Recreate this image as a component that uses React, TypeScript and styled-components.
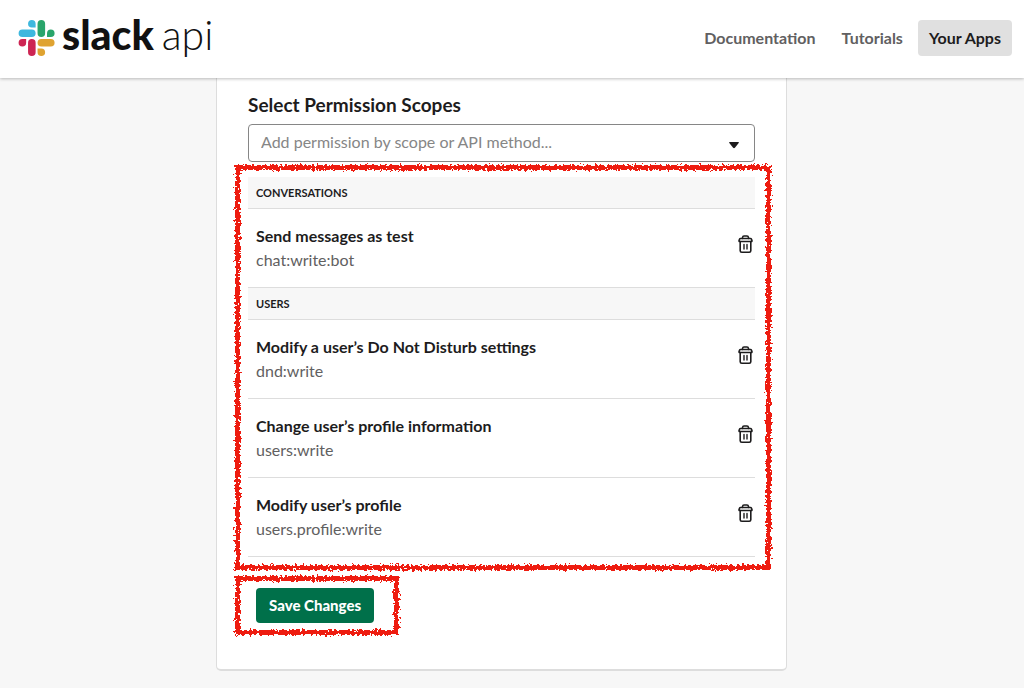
import React from "react";
import styled, { createGlobalStyle } from "styled-components";

const GlobalStyle = createGlobalStyle`
  *, *::before, *::after { box-sizing: border-box; }
  body {
    margin: 0;
    background: #f7f7f7;
    color: #1d1c1d;
    font-family: Lato, "Liberation Sans", sans-serif;
    font-size: 16px;
    line-height: 24px;
  }
  h2, h3, h4, p, ul { margin: 0; padding: 0; }
`;

const Header = styled.header`
  position: sticky;
  top: 0;
  z-index: 2;
  display: flex;
  align-items: center;
  justify-content: space-between;
  height: 78px;
  padding: 0 12px 2px 18px;
  background: #fff;
  box-shadow: 0 1px 3px rgba(0, 0, 0, 0.25);
`;

const Brand = styled.a`
  display: flex;
  align-items: center;
  gap: 8px;
  color: #111;
  text-decoration: none;
`;

const Wordmark = styled.span`
  display: flex;
  gap: 8px;
  padding-bottom: 6px;
  font-size: 41px;
  line-height: 40px;
`;

const BrandName = styled.span`
  font-weight: 900;
`;

const BrandSuffix = styled.span`
  font-weight: 300;
`;

const Nav = styled.nav`
  display: flex;
  align-items: center;
  gap: 4px;
`;

const NavLink = styled.a<{ $active?: boolean }>`
  padding: 6px 11px;
  border-radius: 4px;
  background: ${(p) => (p.$active ? "#e0e0e0" : "transparent")};
  color: ${(p) => (p.$active ? "#1d1c1d" : "#616061")};
  font-weight: 700;
  text-decoration: none;
`;

const Main = styled.main`
  display: grid;
  grid-template-columns: 216fr minmax(auto, 571px) 237fr;
  padding-bottom: 18px;
`;

const Card = styled.section`
  grid-column: 2;
  padding: 15px 31px 46px;
  border: 1px solid #ddd;
  border-top: 0;
  border-bottom-width: 2px;
  border-radius: 0 0 5px 5px;
  background: #fff;
`;

const Title = styled.h2`
  margin-bottom: 7px;
  font-size: 19px;
  font-weight: 700;
`;

const Picker = styled.div`
  display: flex;
  align-items: center;
  height: 38px;
  padding: 0 14px 0 12px;
  border: 1px solid #868686;
  border-radius: 4px;
`;

const PickerInput = styled.input`
  flex: 1;
  min-width: 0;
  padding: 0 0 2px;
  border: 0;
  outline: 0;
  background: transparent;
  color: inherit;
  font: inherit;
  &::placeholder { color: #868686; opacity: 1; }
`;

const Caret = styled.svg`
  width: 12px;
  height: 8px;
  margin-top: 4px;
`;

const Marked = styled.div`
  position: relative;
`;

const ScopeArea = styled(Marked)`
  margin-top: 15px;
`;

const GroupName = styled.h3`
  height: 32px;
  padding: 0 8px;
  border-bottom: 1px solid #ddd;
  background: #f7f7f7;
  font-size: 11px;
  font-weight: 700;
  line-height: 31px;
  text-transform: uppercase;
`;

const ScopeList = styled.ul`
  list-style: none;
`;

const ScopeRow = styled.li`
  display: flex;
  align-items: center;
  justify-content: space-between;
  padding: 15px 0 15px 8px;
  border-bottom: 1px solid #ddd;
`;

const ScopeTitle = styled.h4`
  font-size: 16px;
  font-weight: 700;
`;

const ScopeCode = styled.p`
  color: #616061;
`;

const IconButton = styled.button`
  display: flex;
  padding: 0 0 8px;
  border: 0;
  background: none;
  color: #1d1c1d;
  cursor: pointer;
`;

const SaveArea = styled(Marked)`
  width: fit-content;
  margin-top: 31px;
  margin-left: 8px;
`;

const SaveButton = styled.button`
  display: block;
  height: 35px;
  padding: 0 13px 2px;
  border: 0;
  border-radius: 4px;
  background: #00704a;
  color: #fff;
  font: inherit;
  font-size: 15px;
  font-weight: 900;
  cursor: pointer;
`;

const CrayonFrame = styled.div<{ $inset: string }>`
  position: absolute;
  inset: ${(p) => p.$inset};
  border: 5px solid #ee1c10;
  filter: url(#crayon);
  pointer-events: none;
`;

const HiddenDefs = styled.svg`
  position: absolute;
  width: 0;
  height: 0;
`;

function CrayonFilter() {
  return (
    <HiddenDefs aria-hidden="true">
      <filter id="crayon" x="-5%" y="-20%" width="110%" height="140%" colorInterpolationFilters="sRGB">
        <feTurbulence type="fractalNoise" baseFrequency="0.4" numOctaves={2} seed={4} result="noise" />
        <feDisplacementMap in="SourceGraphic" in2="noise" scale={7} xChannelSelector="R" yChannelSelector="G" result="rough" />
        <feGaussianBlur in="rough" stdDeviation="0.4" />
      </filter>
    </HiddenDefs>
  );
}

function SlackMark() {
  return (
    <svg width="36" height="36" viewBox="-2 0 122.8 122.8" overflow="visible" aria-hidden="true">
      <path fill="#cd2553" d="M25.8 77.6a12.9 12.9 0 1 1-12.9-12.9h12.9zM32.3 77.6a12.9 12.9 0 0 1 25.8 0v32.3a12.9 12.9 0 0 1-25.8 0z" />
      <path fill="#3eb8de" d="M45.2 25.8a12.9 12.9 0 1 1 12.9-12.9v12.9zM45.2 32.3a12.9 12.9 0 0 1 0 25.8H12.9a12.9 12.9 0 0 1 0-25.8z" />
      <path fill="#2aa56b" d="M97 45.2a12.9 12.9 0 1 1 12.9 12.9H97zM90.5 45.2a12.9 12.9 0 0 1-25.8 0V12.9a12.9 12.9 0 0 1 25.8 0z" />
      <path fill="#dfa331" d="M77.6 97a12.9 12.9 0 1 1-12.9 12.9V97zM77.6 90.5a12.9 12.9 0 0 1 0-25.8h32.3a12.9 12.9 0 0 1 0 25.8z" />
    </svg>
  );
}

function TrashIcon() {
  return (
    <svg width="18" height="20" viewBox="0 0 18 20" fill="none" stroke="currentColor" strokeWidth="1.6" strokeLinejoin="round" strokeLinecap="round" aria-hidden="true">
      <path d="M5.5 4.500V3.500Q5.700 2 7 2h3Q11.300 2 11.500 3.500V4.500" />
      <path d="M3.600 4.500h9.800q.8 0 1.100.8l.5 1.400q.1.800-.6.800H2.600q-.7 0-.6-.8l.5-1.400Q2.800 4.500 3.600 4.500z" />
      <path d="M3.200 7.500v9.200q0 1.600 1.600 1.600h7.400q1.600 0 1.600-1.600V7.500" />
      <path d="M7 10.500v4.500M10 10.500v4.500" strokeWidth="1.400" />
    </svg>
  );
}

type Scope = { title: string; code: string };

const groups: { name: string; scopes: Scope[] }[] = [
  { name: "Conversations", scopes: [{ title: "Send messages as test", code: "chat:write:bot" }] },
  {
    name: "Users",
    scopes: [
      { title: "Modify a user’s Do Not Disturb settings", code: "dnd:write" },
      { title: "Change user’s profile information", code: "users:write" },
      { title: "Modify user’s profile", code: "users.profile:write" },
    ],
  },
];

export default function App() {
  return (
    <>
      <GlobalStyle />
      <CrayonFilter />
      <Header>
        <Brand href="#">
          <SlackMark />
          <Wordmark>
            <BrandName>slack</BrandName>
            <BrandSuffix>api</BrandSuffix>
          </Wordmark>
        </Brand>
        <Nav>
          <NavLink href="#">Documentation</NavLink>
          <NavLink href="#">Tutorials</NavLink>
          <NavLink href="#" $active>Your Apps</NavLink>
        </Nav>
      </Header>
      <Main>
        <Card>
          <Title><label htmlFor="scope">Select Permission Scopes</label></Title>
          <Picker>
            <PickerInput id="scope" placeholder="Add permission by scope or API method..." />
            <Caret viewBox="0 0 12 8" aria-hidden="true">
              <path d="M1.800 1h8.400q1.200 0 .5.900L6.900 6.700q-.9.900-1.800 0L1.300 1.900Q.6 1 1.800 1z" fill="#1d1c1d" />
            </Caret>
          </Picker>
          <ScopeArea>
            {groups.map((group) => (
              <section key={group.name}>
                <GroupName>{group.name}</GroupName>
                <ScopeList>
                  {group.scopes.map((scope) => (
                    <ScopeRow key={scope.code}>
                      <div>
                        <ScopeTitle>{scope.title}</ScopeTitle>
                        <ScopeCode>{scope.code}</ScopeCode>
                      </div>
                      <IconButton type="button" aria-label={`Remove ${scope.code}`}>
                        <TrashIcon />
                      </IconButton>
                    </ScopeRow>
                  ))}
                </ScopeList>
              </section>
            ))}
            <CrayonFrame $inset="-12px -16px -13px -13px" />
          </ScopeArea>
          <SaveArea>
            <SaveButton type="button">Save Changes</SaveButton>
            <CrayonFrame $inset="-12px -25px -12px -21px" />
          </SaveArea>
        </Card>
      </Main>
    </>
  );
}
